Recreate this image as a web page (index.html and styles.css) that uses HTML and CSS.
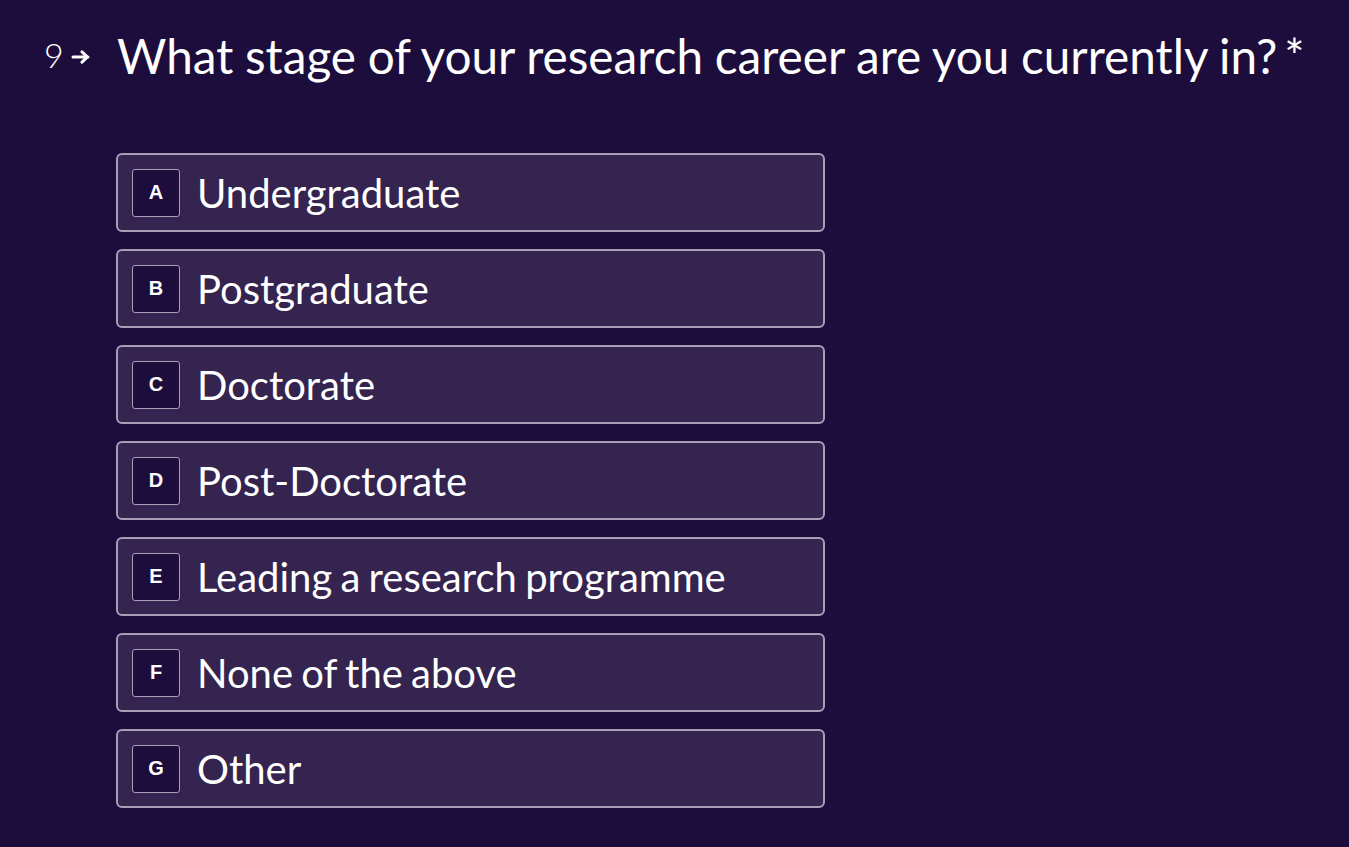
FILE: index.html
```html
<!DOCTYPE html>
<html>
<head>
<meta charset="utf-8">
<link rel="stylesheet" href="styles.css">
</head>
<body>
<main class="question">
  <div class="q-head">
    <div class="q-num"><span>9</span>
      <svg class="arrow" width="20" height="14" viewBox="0 0 20 14"><path d="M2 7h15M11 1.8L16.5 7 11 12.2" fill="none" stroke="#fff" stroke-width="3" stroke-linecap="round" stroke-linejoin="round"/></svg>
    </div>
    <h1 class="q-title">What stage of your research career are you currently in?<span class="req">*</span></h1>
  </div>
  <ul class="options">
    <li class="option"><span class="key">A</span><span class="label">Undergraduate</span></li>
    <li class="option"><span class="key">B</span><span class="label">Postgraduate</span></li>
    <li class="option"><span class="key">C</span><span class="label">Doctorate</span></li>
    <li class="option"><span class="key">D</span><span class="label">Post-Doctorate</span></li>
    <li class="option"><span class="key">E</span><span class="label">Leading a research programme</span></li>
    <li class="option"><span class="key">F</span><span class="label">None of the above</span></li>
    <li class="option"><span class="key">G</span><span class="label">Other</span></li>
  </ul>
</main>
</body>
</html>
```
FILE: styles.css
```css
html, body {
  margin: 0;
  padding: 0;
  background: #1d0d3c;
  color: #ffffff;
  font-family: Lato, "Noto Sans", sans-serif;
}
.question {
  padding: 28px 0 0 0;
}
.q-head {
  display: flex;
  align-items: flex-start;
}
.q-num {
  width: 117px;
  box-sizing: border-box;
  padding: 11px 0 0 44px;
  display: flex;
  align-items: center;
  gap: 7px;
  font-size: 34px;
  font-weight: 300;
  line-height: 32px;
}
.arrow {
  display: block;
  margin-top: 3px;
}
.q-title {
  margin: 0;
  font-weight: 400;
  font-size: 47.7px;
  line-height: 56px;
  word-spacing: -0.5px;
}
.req {
  margin-left: 7px;
}
.options {
  list-style: none;
  margin: 69px 0 0 116px;
  padding: 0;
  display: flex;
  flex-direction: column;
  gap: 17px;
  width: 709px;
}
.option {
  box-sizing: border-box;
  height: 79px;
  display: flex;
  align-items: center;
  padding: 0 0 0 14px;
  background: #34244f;
  border: 2px solid #a79fb6;
  border-radius: 6px;
}
.key {
  box-sizing: border-box;
  width: 48px;
  height: 48px;
  display: flex;
  align-items: center;
  justify-content: center;
  background: #1d0d3c;
  border: 1px solid #a79fb6;
  border-radius: 3px;
  font-family: "Liberation Sans", Arial, sans-serif;
  font-weight: 700;
  font-size: 20px;
}
.label {
  margin-left: 17px;
  font-size: 40px;
  line-height: 48px;
  word-spacing: -2px;
}
```
